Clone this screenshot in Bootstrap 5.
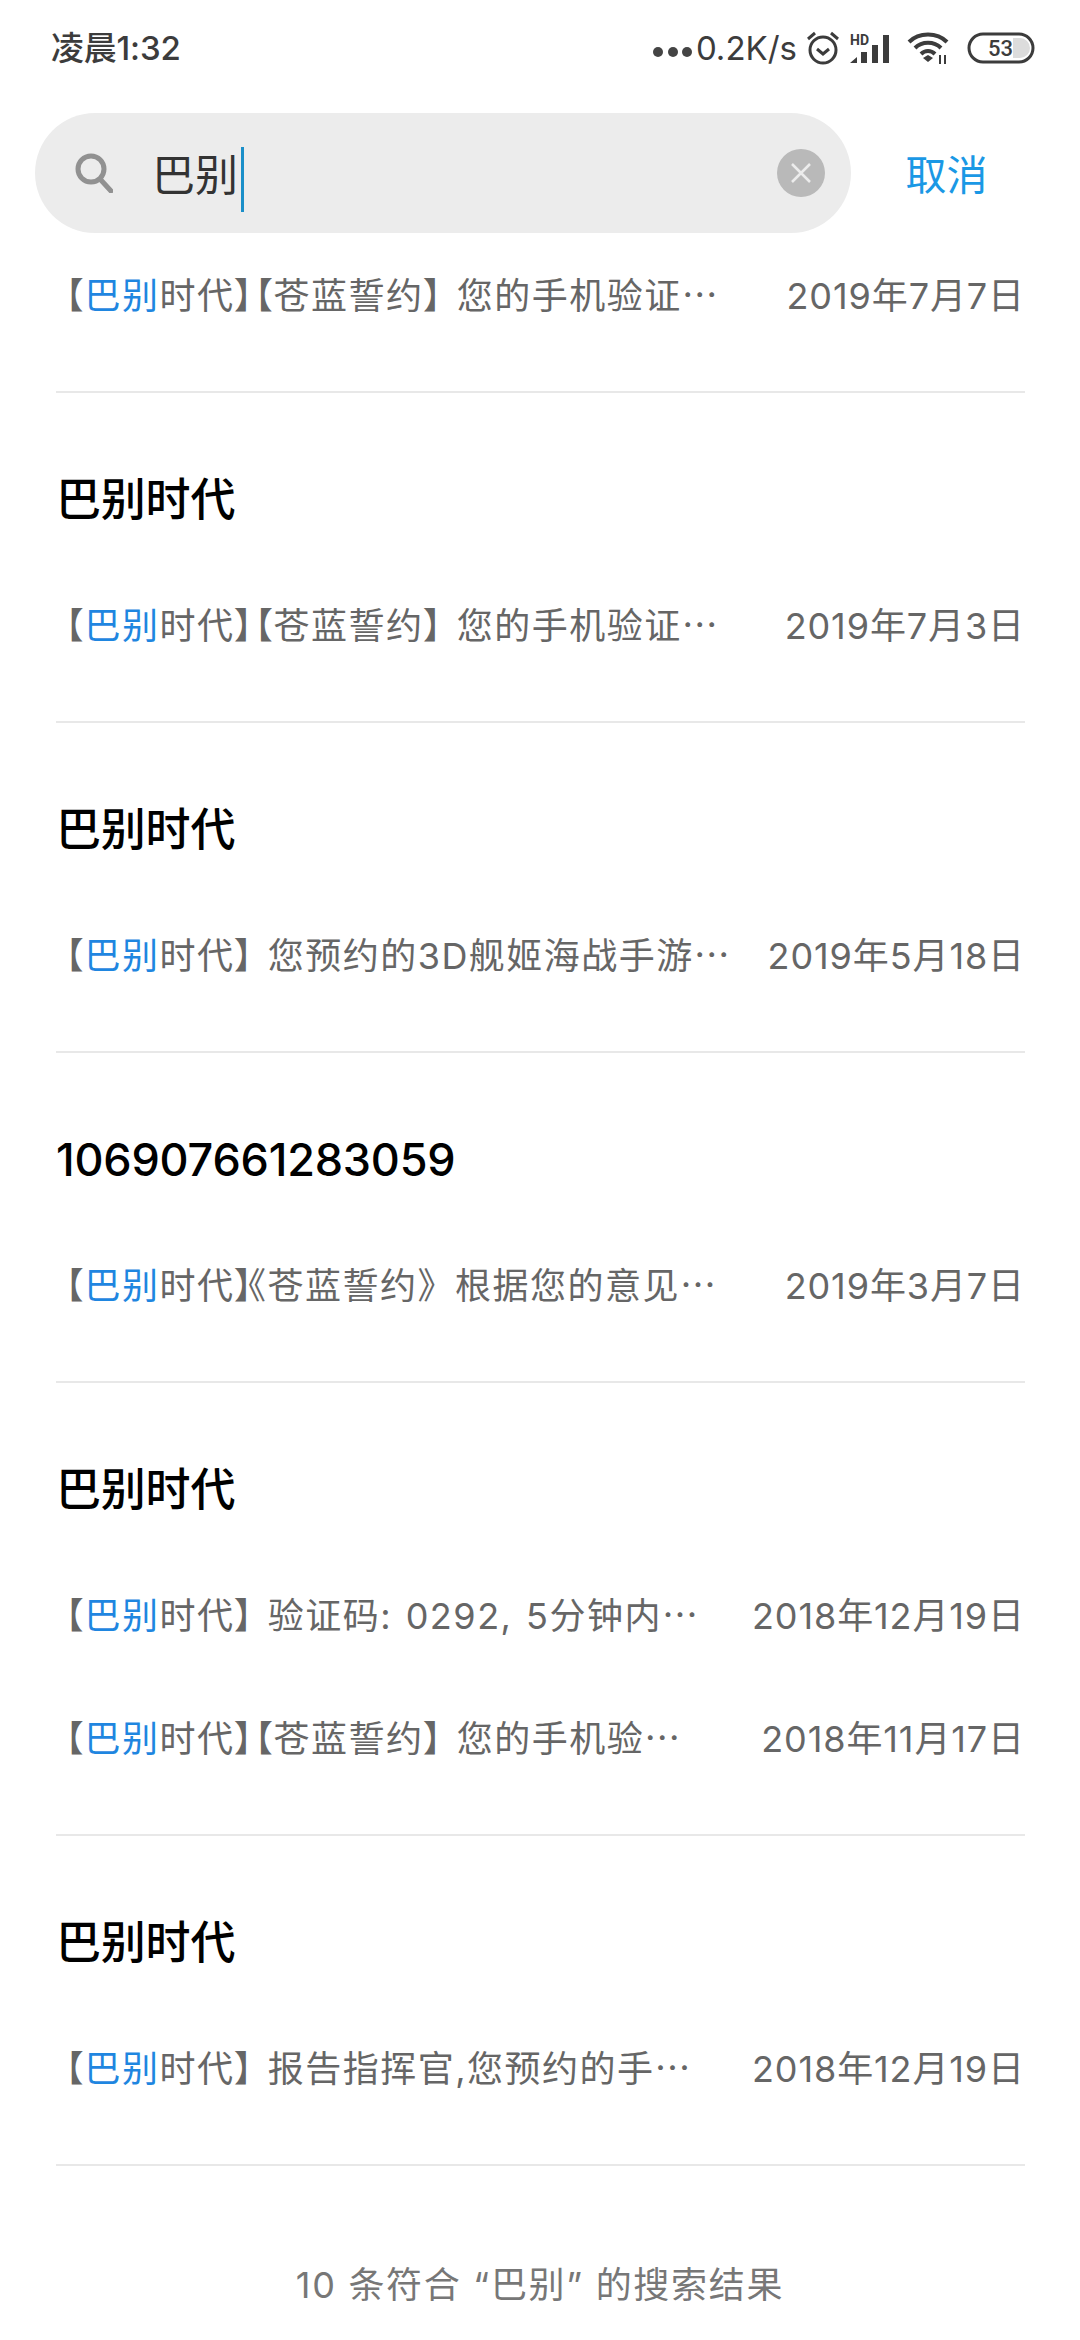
<!DOCTYPE html>
<html lang="zh">

<head>
    <meta charset="utf-8">
    <title>搜索</title>
    <link rel="stylesheet" href="https://cdn.jsdelivr.net/npm/bootstrap@5.3.0/dist/css/bootstrap.min.css">
    <style>
        body {
            width: 1080px;
            height: 2340px;
            overflow: hidden;
            background: #fff;
            font-family: Inter, "Noto Sans CJK SC", sans-serif;
        }

        .status-bar {
            height: 113px;
            padding: 0 45px 18px 51px;
            color: #3c3c3c;
        }

        .status-time {
            font-size: 33px;
            font-weight: 500;
            line-height: 40px;
            letter-spacing: -.2px;
        }

        .status-speed {
            font-size: 33px;
            line-height: 40px;
            margin: 0 8px 0 3px;
        }

        .signal-icon {
            overflow: visible;
        }

        .search-row {
            height: 120px;
            padding-left: 35px;
        }

        .search-pill {
            width: 816px;
            height: 120px;
            background: #ececec;
            border-radius: 60px;
            padding: 0 26px 0 40px;
        }

        .search-text {
            font-size: 43px;
            line-height: 56px;
            color: #333;
            margin: 13px 0 0 39px;
            padding: 0 3px 9px 0;
            border-right: 3px solid #1a8fc9;
        }

        .clear-btn {
            width: 48px;
            height: 48px;
            border-radius: 50%;
            background: #b9b9b9;
        }

        .cancel-btn {
            width: 0;
            flex-grow: 1;
            padding: 6px 38px 0 0;
            text-align: center;
            color: #1a98e5;
            font-size: 41px;
        }

        .thread {
            margin: 0 55px 0 56px;
            border-bottom: 2px solid #e8e8e8;
            padding-bottom: 35px;
        }

        .thread-name {
            padding-top: 67px;
            height: 170px;
            font-size: 45px;
            line-height: 80px;
            font-weight: 500;
            color: #000;
            letter-spacing: -.2px;
        }

        .msg-row {
            height: 123px;
            padding-top: 3px;
            font-size: 36px;
            color: #666;
        }

        .msg-text {
            font-feature-settings: "palt";
            white-space: nowrap;
            padding-left: 9px;
            letter-spacing: 1.5px;
            word-spacing: 2px;
        }

        .msg-text b {
            font-weight: 400;
            color: #1f86e0;
        }

        .msg-text .full-width {
            font-feature-settings: normal;
            margin-left: -6px;
        }

        .msg-date {
            white-space: nowrap;
            letter-spacing: .9px;
        }

        .result-count {
            margin-top: 83px;
            text-align: center;
            font-size: 36px;
            line-height: 72px;
            color: #777;
            font-feature-settings: "palt";
            letter-spacing: 1.7px;
        }
    </style>
</head>

<body>
    <div class="status-bar d-flex align-items-center justify-content-between">
        <div class="status-time">凌晨1:32</div>
        <div class="d-flex align-items-center">
            <svg width="40" height="12" viewBox="0 0 40 12" class="mt-2">
                <circle cx="5" cy="6" r="5" fill="#444" />
                <circle cx="20" cy="6" r="5" fill="#444" />
                <circle cx="34" cy="6" r="5" fill="#444" />
            </svg>
            <span class="status-speed">0.2K/s</span>
            <svg width="36" height="36" viewBox="0 0 36 36">
                <circle cx="18" cy="20" r="13" fill="none" stroke="#3c3c3c" stroke-width="3" />
                <path d="M12 19l6 5 6-5" fill="none" stroke="#3c3c3c" stroke-width="3" />
                <path d="M3 9l7-6M33 9l-7-6" fill="none" stroke="#3c3c3c" stroke-width="3" />
            </svg>
            <svg width="42" height="36" viewBox="0 0 42 36" class="signal-icon ms-2">
                <text x="1" y="15" font-size="14" font-weight="700" fill="#3c3c3c" font-family="Roboto, sans-serif">HD</text>
                <path d="M1 33l7-6v6zM12 22h6v11h-6zM23 15h6v18h-6zM34 5h6v28h-6z" fill="#3c3c3c" />
            </svg>
            <svg width="44" height="34" viewBox="0 0 44 34" class="ms-3">
                <path d="M2 11C12 1 30 1 40 11M8 17C15 10 27 10 34 17M14 23c4-4 10-4 14 0" fill="none" stroke="#3c3c3c" stroke-width="4" />
                <path d="M16 27l5-3 5 3-5 4z" fill="#3c3c3c" />
                <path d="M33 24v9M38 24v9" stroke="#3c3c3c" stroke-width="2" />
            </svg>
            <svg width="68" height="32" viewBox="0 0 68 32" class="ms-3">
                <rect x="2" y="2" width="64" height="28" rx="14" fill="#fff" stroke="#3c3c3c" stroke-width="3" />
                <path d="M46 6h7a10 10 0 0 1 0 20h-7z" fill="#dcdcdc" />
                <text x="21" y="24" font-size="22" font-weight="500" fill="#3c3c3c" font-family="Roboto, sans-serif">53</text>
            </svg>
        </div>
    </div>

    <div class="search-row d-flex align-items-center">
        <div class="search-pill d-flex align-items-center">
            <svg width="38" height="40" viewBox="0 0 38 40">
                <circle cx="16" cy="16" r="13" fill="none" stroke="#919191" stroke-width="5" />
                <path d="M25 26l11 12" stroke="#919191" stroke-width="5" stroke-linecap="round" />
            </svg>
            <div class="search-text">巴别</div>
            <div class="clear-btn d-flex align-items-center justify-content-center ms-auto">
                <svg width="24" height="24" viewBox="0 0 24 24">
                    <path d="M3 3l18 18M21 3L3 21" stroke="#ececec" stroke-width="2.5" />
                </svg>
            </div>
        </div>
        <div class="cancel-btn">取消</div>
    </div>

    <div id="threads"></div>
    <div class="result-count">10 条符合 “巴别” 的搜索结果</div>

    <script>
        const threads = [
            { name: "", msgs: [["时代】【苍蓝誓约】 您的手机验证⋯", "2019年7月7日"]] },
            { name: "巴别时代", msgs: [["时代】【苍蓝誓约】 您的手机验证⋯", "2019年7月3日"]] },
            { name: "巴别时代", msgs: [["时代】 您预约的3D舰姬海战手游⋯", "2019年5月18日"]] },
            { name: "106907661283059", msgs: [['时代】<span class="full-width">《苍蓝誓约》</span>根据您的意见⋯', "2019年3月7日"]] },
            { name: "巴别时代", msgs: [["时代】 验证码: 0292, 5分钟内⋯", "2018年12月19日"], ["时代】【苍蓝誓约】 您的手机验⋯", "2018年11月17日"]] },
            { name: "巴别时代", msgs: [["时代】 报告指挥官,您预约的手⋯", "2018年12月19日"]] }
        ];

        document.getElementById("threads").innerHTML = threads.map(t => {
            const name = t.name ? `<div class="thread-name">${t.name}</div>` : "";
            const rows = t.msgs.map(m => `
                <div class="msg-row d-flex align-items-center justify-content-between">
                    <div class="msg-text">【<b>巴别</b>${m[0]}</div>
                    <div class="msg-date">${m[1]}</div>
                </div>`).join("");
            return `<div class="thread">${name}${rows}</div>`;
        }).join("");
    </script>
    <script src="https://cdn.jsdelivr.net/npm/bootstrap@5.3.0/dist/js/bootstrap.bundle.min.js"></script>
</body>

</html>
